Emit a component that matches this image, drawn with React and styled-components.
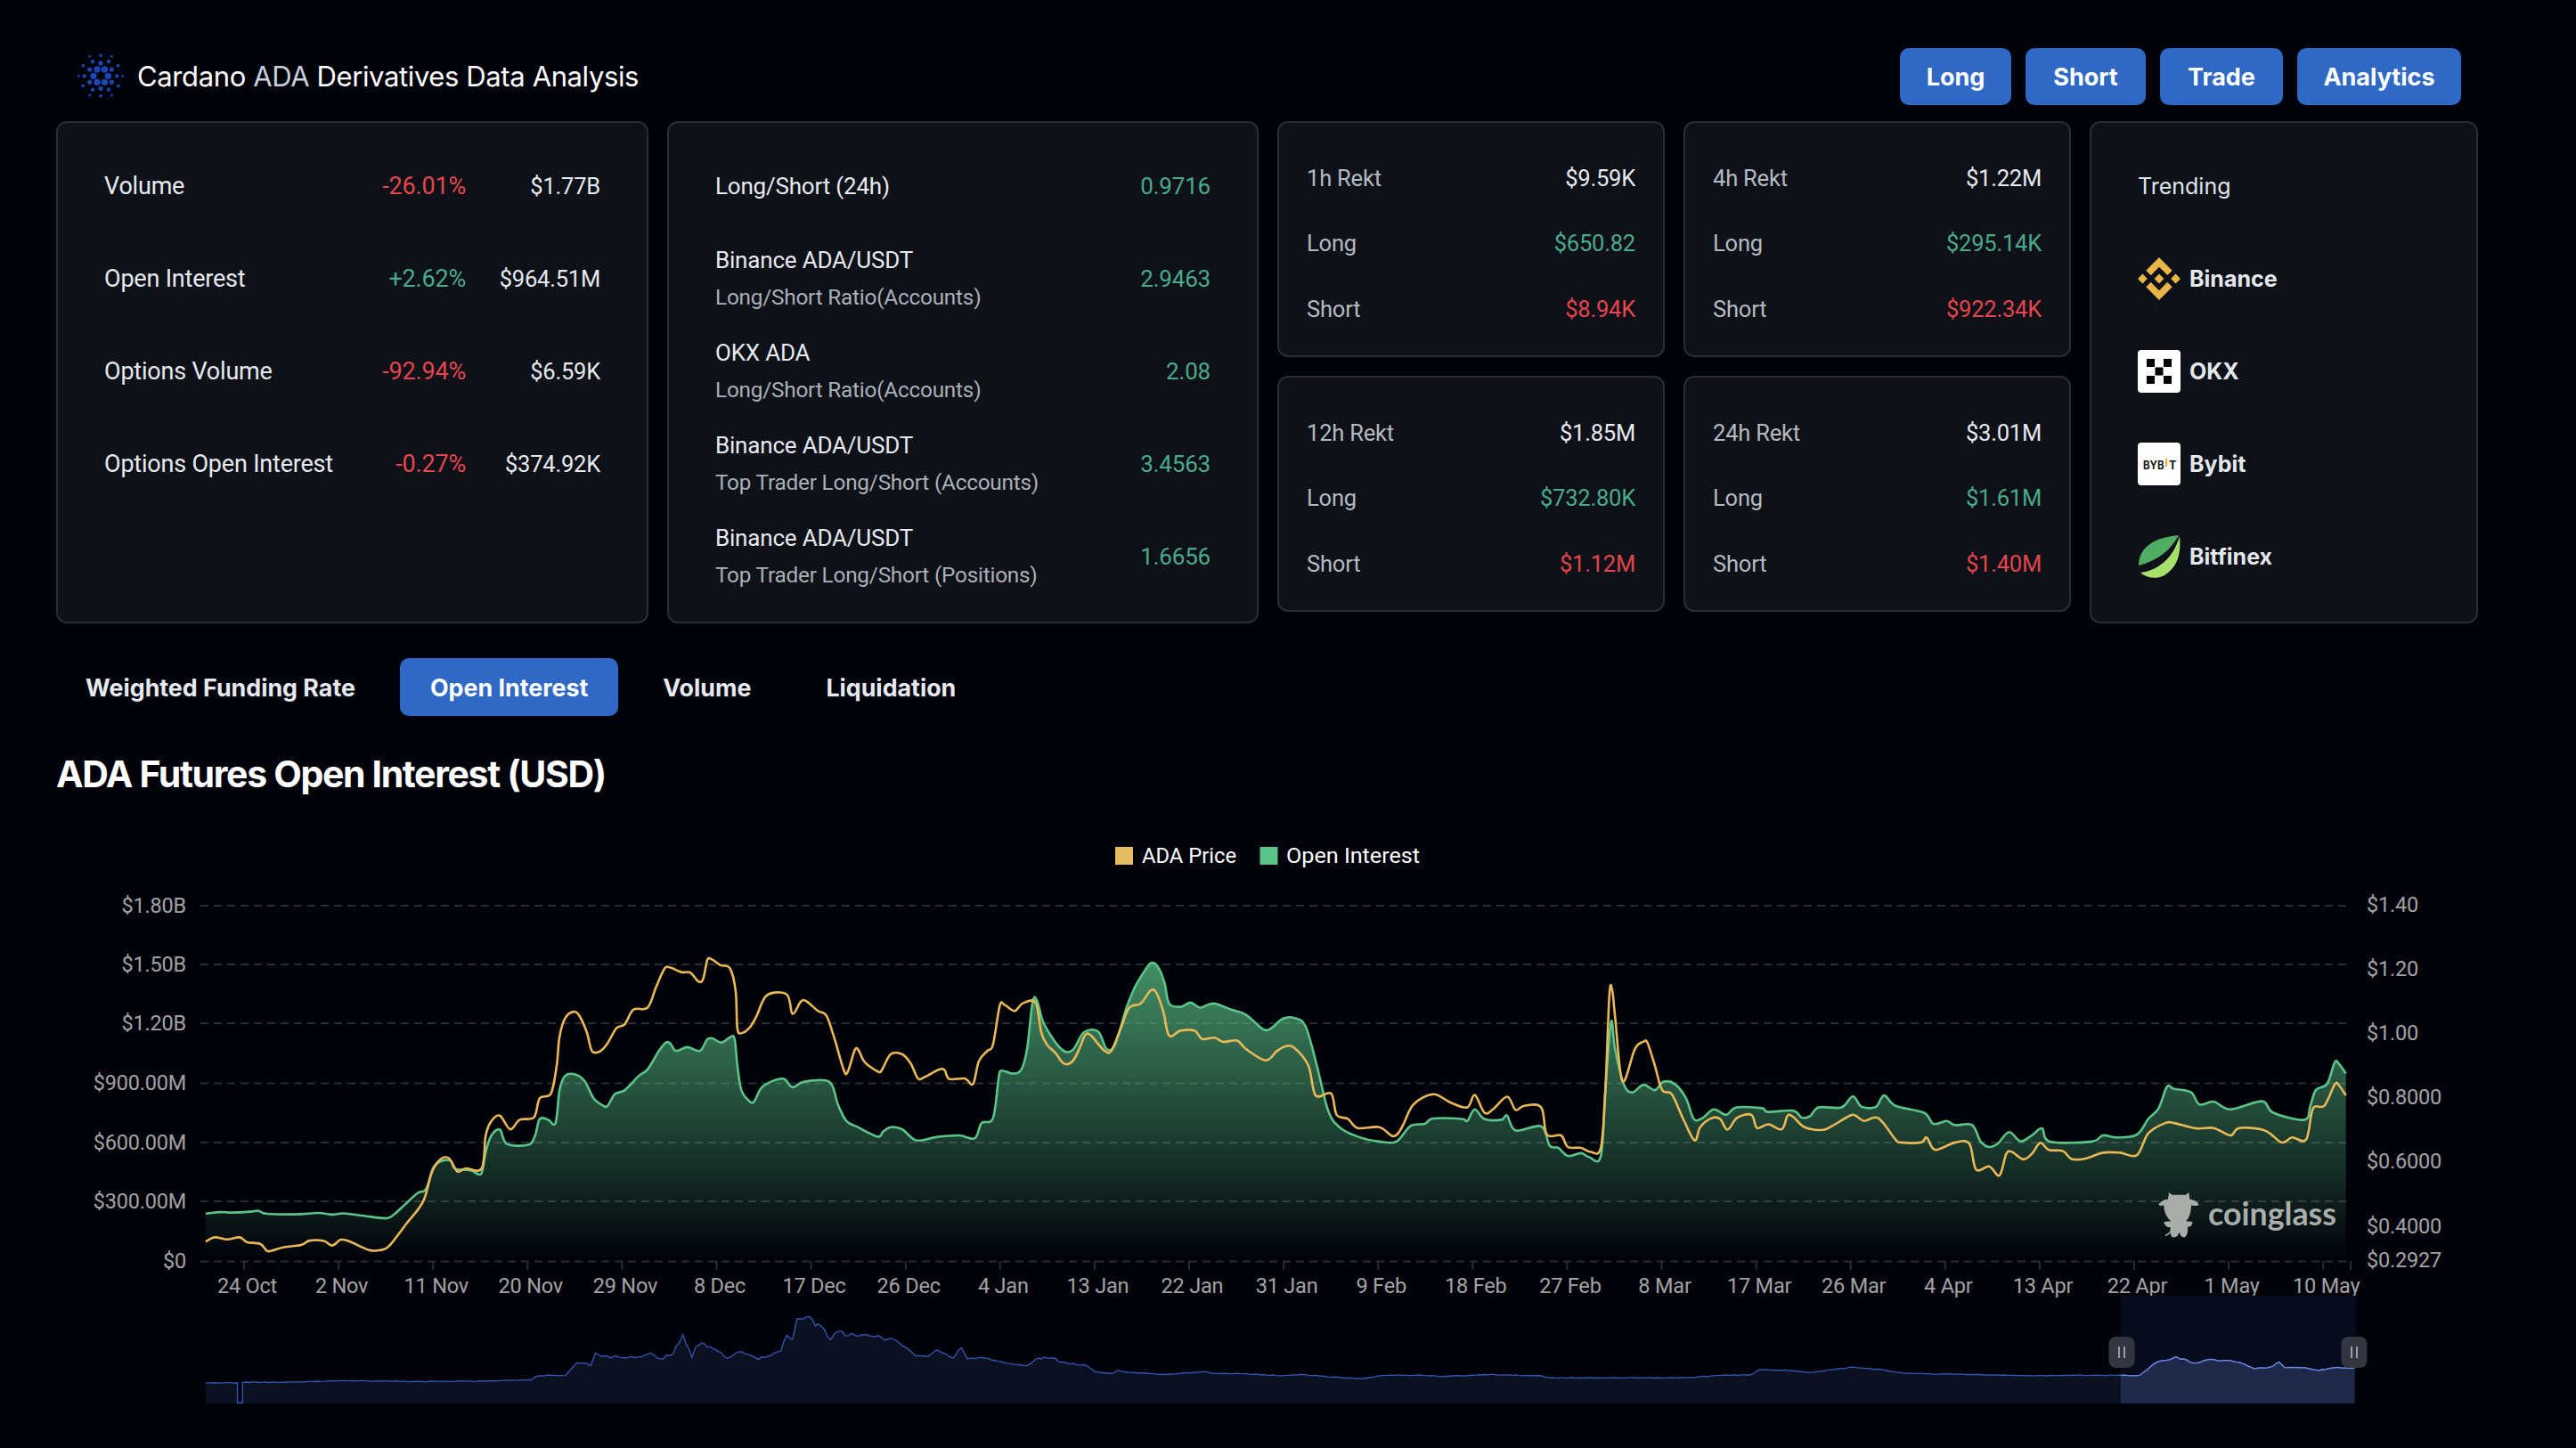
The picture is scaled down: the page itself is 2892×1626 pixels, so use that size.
import styled, { createGlobalStyle } from 'styled-components';

// chart traces, read off the picture in crop coordinates (crop origin x, crop scale 1.568 / 2.16)
const fromCrop = (ox, pts) => pts.map(([x, y]) => [ox + x / 1.568, 900 + y / 2.16]);

const OI = [
  ...fromCrop(0, [[362,1000],[385,996],[410,997],[440,995],[455,993],[470,1000],[530,1001],[560,998],[585,1002],[605,999],[640,1005],[680,1011],[695,1000],[715,975],[735,950],[750,940],[762,890],[775,873],[793,871],[800,890],[815,893],[830,895],[847,903],[855,850],[865,810],[880,796],[892,830],[930,833],[942,810],[950,770],[965,772],[978,780],[985,700],[995,665],[1015,663],[1030,680],[1045,720],[1062,738],[1070,738],[1082,710],[1100,700],[1125,665],[1140,650],[1160,605],[1172,585],[1180,587],[1190,605],[1210,596],[1232,605],[1245,577],[1255,575],[1270,585],[1285,572],[1293,575],[1298,640],[1305,700],[1320,728],[1328,727],[1340,695],[1360,678],[1380,673],[1395,693],[1415,680],[1460,680],[1475,735],[1490,775],[1510,790],[1545,813],[1555,800]]),
  ...fromCrop(1000, [[0,790],[20,795],[45,822],[80,814],[120,810],[148,817],[160,780],[180,768],[190,670],[195,653],[215,660],[230,650],[240,600],[250,485],[258,485],[270,540],[300,600],[320,603],[340,560],[365,558],[380,600],[395,590],[415,500],[430,450],[445,415],[458,392],[470,400],[482,440],[490,490],[510,498],[528,488],[545,500],[568,490],[600,505],[625,517],[655,552],[670,550],[690,527],[710,525],[730,545],[750,640],[770,750],[790,790],[820,812],[860,825],[890,825],[915,787],[940,782],[955,769],[1005,770],[1015,775],[1028,747],[1045,770],[1075,772],[1085,762],[1100,798],[1145,788],[1160,835],[1175,840],[1192,860],[1215,853],[1230,863],[1250,860],[1258,700],[1268,535],[1275,600],[1290,685],[1305,706],[1325,687],[1345,700],[1360,680],[1380,685],[1400,720]]),
  ...fromCrop(1892, [[15,770],[30,768],[50,747],[72,760],[90,742],[135,744],[145,753],[190,750],[205,767],[220,763],[235,742],[275,742],[295,715],[310,740],[335,741],[350,713],[370,738],[420,755],[437,782],[460,775],[475,785],[505,785],[520,825],[535,838],[550,830],[570,802],[590,824],[610,810],[628,793],[642,825],[715,825],[735,810],[760,815],[795,808],[815,770],[833,745],[848,692],[860,697],[890,705],[905,735],[930,728],[960,747],[1015,727],[1035,755],[1090,772],[1100,740],[1110,700],[1130,685],[1143,633],[1150,635],[1163,660]]),
];

const PRICE = [
  ...fromCrop(0, [[362,1068],[378,1057],[400,1062],[422,1057],[435,1069],[458,1073],[470,1090],[480,1089],[500,1081],[530,1076],[545,1065],[570,1066],[585,1077],[600,1063],[615,1067],[650,1088],[670,1088],[685,1078],[715,1025],[745,970],[760,900],[775,868],[790,865],[805,897],[820,890],[848,890],[855,810],[865,775],[880,762],[898,795],[915,772],[940,766],[950,720],[970,708],[980,640],[985,570],[995,525],[1010,510],[1020,520],[1033,560],[1042,605],[1055,607],[1068,590],[1085,550],[1100,540],[1115,505],[1140,500],[1155,450],[1170,405],[1180,403],[1200,414],[1215,415],[1230,437],[1238,430],[1245,385],[1252,382],[1268,397],[1285,405],[1295,460],[1298,550],[1305,562],[1320,548],[1332,520],[1350,470],[1385,468],[1395,515],[1410,485],[1420,485],[1440,508],[1455,520],[1470,580],[1485,650],[1492,657],[1505,602],[1512,605],[1522,632],[1545,655],[1552,652]]),
  ...fromCrop(1000, [[0,613],[20,613],[35,635],[48,672],[60,668],[85,650],[95,652],[103,673],[130,672],[145,685],[155,630],[170,605],[180,590],[192,495],[200,493],[218,508],[232,490],[255,488],[265,560],[275,590],[290,610],[305,636],[320,630],[332,600],[342,567],[352,567],[375,603],[388,605],[405,550],[420,500],[440,490],[458,458],[468,465],[480,510],[490,568],[510,556],[535,556],[548,576],[570,573],[585,583],[610,580],[625,600],[660,628],[680,605],[695,594],[710,597],[735,640],[748,713],[775,708],[785,760],[805,770],[822,792],[860,790],[885,812],[900,790],[920,735],[955,710],[985,730],[1015,742],[1028,712],[1045,755],[1060,747],[1085,716],[1100,748],[1115,738],[1145,742],[1155,808],[1180,810],[1192,838],[1215,840],[1232,850],[1250,840],[1258,700],[1265,470],[1270,457],[1275,520],[1288,678],[1310,600],[1325,583],[1332,585],[1345,640],[1358,700],[1375,710],[1395,770],[1415,822],[1425,790],[1445,768],[1460,770],[1473,796],[1490,767],[1515,760],[1525,792],[1545,783]]),
  ...fromCrop(1892, [[170,795],[180,762],[190,765],[210,790],[240,797],[255,790],[290,762],[300,762],[315,775],[340,768],[370,820],[380,827],[415,827],[425,815],[440,845],[475,827],[500,830],[512,893],[535,885],[553,907],[565,855],[575,850],[595,868],[610,855],[625,828],[640,845],[665,848],[680,867],[705,866],[735,852],[765,852],[795,858],[815,805],[845,780],[860,780],[900,793],[930,792],[960,810],[975,792],[1020,798],[1050,827],[1068,815],[1093,820],[1105,745],[1125,738],[1143,687],[1150,687],[1163,713]]),
];

const NAV = [
  ...fromCrop(0, [[362,1410],[418,1410],[418,1459],[427,1459],[427,1409],[520,1408],[620,1405],[730,1407],[850,1406],[935,1403],[945,1394],[965,1391],[995,1393],[1015,1362],[1030,1362],[1040,1368],[1048,1338],[1075,1350],[1085,1345],[1100,1350],[1130,1347],[1145,1338],[1162,1352],[1185,1340],[1190,1322],[1202,1293],[1218,1348],[1225,1322],[1240,1315],[1260,1330],[1280,1350],[1300,1335],[1335,1353],[1375,1332],[1385,1295],[1395,1305],[1403,1255],[1425,1250],[1435,1272],[1445,1272],[1462,1305],[1470,1290],[1500,1290],[1535,1298]]),
  ...fromCrop(1000, [[0,1302],[20,1320],[45,1345],[65,1347],[82,1330],[110,1350],[125,1325],[135,1352],[165,1350],[190,1358],[215,1365],[240,1368],[260,1350],[285,1350],[300,1360],[345,1368],[360,1383],[390,1388],[400,1380],[420,1385],[480,1390],[555,1383],[565,1387],[620,1388],[690,1393],[720,1390],[800,1398],[830,1400],[860,1393],[930,1391],[970,1395],[1045,1390],[1145,1393],[1160,1398]]),
  ...fromCrop(1892, [[0,1398],[60,1392],[115,1391],[131,1378],[185,1380],[220,1385],[295,1372],[345,1378],[385,1387],[510,1390],[615,1393],[720,1392],[800,1392],[830,1360],[865,1347],[895,1362],[925,1353],[975,1360],[1000,1375],[1030,1372],[1045,1360],[1055,1373],[1090,1373],[1115,1380],[1145,1373],[1178,1375]]),
];

function smooth(pts) {
  let d = `M${pts[0][0].toFixed(1)} ${pts[0][1].toFixed(1)}`;
  for (let i = 0; i < pts.length - 1; i++) {
    const p0 = pts[i - 1] || pts[i];
    const p1 = pts[i];
    const p2 = pts[i + 1];
    const p3 = pts[i + 2] || p2;
    const c1 = [p1[0] + (p2[0] - p0[0]) / 6, p1[1] + (p2[1] - p0[1]) / 6];
    const c2 = [p2[0] - (p3[0] - p1[0]) / 6, p2[1] - (p3[1] - p1[1]) / 6];
    d += `C${c1[0].toFixed(1)} ${c1[1].toFixed(1)} ${c2[0].toFixed(1)} ${c2[1].toFixed(1)} ${p2[0].toFixed(1)} ${p2[1].toFixed(1)}`;
  }
  return d;
}

function roughen(pts) {
  let seed = 7;
  const out = [pts[0]];
  for (let i = 1; i < pts.length; i++) {
    const [x0, y0] = pts[i - 1];
    const [x1, y1] = pts[i];
    const steps = Math.max(1, Math.round((x1 - x0) / 3.5));
    for (let s = 1; s <= steps; s++) {
      seed = (seed * 16807) % 2147483647;
      const t = s / steps;
      const y = y0 + (y1 - y0) * t;
      const amp = s === steps || steps === 1 ? 0 : Math.min(3, Math.max(0.4, (1540 - y) / 12));
      out.push([x0 + (x1 - x0) * t, y + ((seed % 100) / 50 - 1) * amp]);
    }
  }
  return out;
}

const straight = (pts) => 'M' + pts.map(([x, y]) => `${x.toFixed(1)} ${y.toFixed(1)}`).join('L');

const GRID_Y = [1017, 1083, 1149, 1216.5, 1283, 1349, 1416.5];
const LEFT_AXIS = ['$1.80B', '$1.50B', '$1.20B', '$900.00M', '$600.00M', '$300.00M', '$0'];
const RIGHT_AXIS = [
  ['$1.40', 1016],
  ['$1.20', 1088],
  ['$1.00', 1160],
  ['$0.8000', 1232],
  ['$0.6000', 1304],
  ['$0.4000', 1377],
  ['$0.2927', 1415],
];
const DATES = ['24 Oct', '2 Nov', '11 Nov', '20 Nov', '29 Nov', '8 Dec', '17 Dec', '26 Dec', '4 Jan', '13 Jan', '22 Jan', '31 Jan', '9 Feb', '18 Feb', '27 Feb', '8 Mar', '17 Mar', '26 Mar', '4 Apr', '13 Apr', '22 Apr', '1 May', '10 May'];

const ACTIONS = [
  { label: 'Long', width: 125 },
  { label: 'Short', width: 135 },
  { label: 'Trade', width: 138 },
  { label: 'Analytics', width: 184 },
];

const VOLUME = [
  { label: 'Volume', change: '-26.01%', value: '$1.77B' },
  { label: 'Open Interest', change: '+2.62%', value: '$964.51M', up: true },
  { label: 'Options Volume', change: '-92.94%', value: '$6.59K' },
  { label: 'Options Open Interest', change: '-0.27%', value: '$374.92K' },
];

const RATIOS = [
  { title: 'Long/Short (24h)', value: '0.9716' },
  { title: 'Binance ADA/USDT', sub: 'Long/Short Ratio(Accounts)', value: '2.9463' },
  { title: 'OKX ADA', sub: 'Long/Short Ratio(Accounts)', value: '2.08' },
  { title: 'Binance ADA/USDT', sub: 'Top Trader Long/Short (Accounts)', value: '3.4563' },
  { title: 'Binance ADA/USDT', sub: 'Top Trader Long/Short (Positions)', value: '1.6656' },
];

const REKT = [
  [
    { span: '1h Rekt', total: '$9.59K', long: '$650.82', short: '$8.94K' },
    { span: '12h Rekt', total: '$1.85M', long: '$732.80K', short: '$1.12M' },
  ],
  [
    { span: '4h Rekt', total: '$1.22M', long: '$295.14K', short: '$922.34K' },
    { span: '24h Rekt', total: '$3.01M', long: '$1.61M', short: '$1.40M' },
  ],
];

const CARDANO_DOTS = [
  [3.7, [[135,142],[184,142],[147,120],[172,120],[147,163],[172,163]]],
  [2.6, [[159,99],[159,184],[196,120],[122,120],[196,163],[122,163]]],
  [2.2, [[214,142],[104,142],[186,93],[132,93],[186,188],[132,188]]],
  [1.8, [[218,107],[100,107],[218,175],[100,175],[159,73],[159,209]]],
  [1.4, [[233,142],[85,142],[196,76],[122,76],[196,207],[122,207]]],
];

function CardanoLogo() {
  return (
    <svg width="57" height="52" viewBox="25 22 57 52" fill="#1f45b5">
      {CARDANO_DOTS.flatMap(([r, dots]) =>
        dots.map(([x, y]) => <circle key={`${x}-${y}`} cx={x / 3} cy={y / 3} r={r} />),
      )}
    </svg>
  );
}

function BinanceLogo() {
  return (
    <svg width="48" height="48" viewBox="0 0 24 24" fill="#e8b547">
      <path d="M16.624 13.9202l2.7175 2.7154-7.353 7.353-7.353-7.352 2.7175-2.7164 4.6355 4.6595 4.6356-4.6595zm4.6366-4.6366L24 12l-2.7154 2.7164L18.5682 12l2.6924-2.7164zm-9.272.001l2.7163 2.6914-2.7164 2.7174v-.001L9.2721 12l2.7164-2.7154zm-9.2722-.001L5.4088 12l-2.6914 2.6924L0 12l2.7164-2.7164zM11.9885.0115l7.353 7.329-2.7174 2.7154-4.6356-4.6356-4.6355 4.6595-2.7174-2.7154 7.353-7.353z" />
    </svg>
  );
}

function OkxLogo() {
  return (
    <svg width="48" height="48" viewBox="0 0 48 48">
      <rect width="48" height="48" rx="4" fill="#fff" />
      <path d="M10 10h9v9h-9zM29 10h9v9h-9zM19.500 19.500h9v9h-9zM10 29h9v9h-9zM29 29h9v9h-9z" fill="#000" />
    </svg>
  );
}

function BybitLogo() {
  return (
    <svg width="48" height="48" viewBox="0 0 48 48">
      <rect width="48" height="48" rx="4" fill="#fff" />
      <text x="6" y="29.500" fontFamily="Inter, sans-serif" fontWeight="700" fontSize="12.500" textLength="23.500" lengthAdjust="spacingAndGlyphs" fill="#111">BYB</text>
      <rect x="31.200" y="17.700" width="1.800" height="9.300" fill="#f7a600" />
      <text x="35" y="29.500" fontFamily="Inter, sans-serif" fontWeight="700" fontSize="12.500" fill="#111">T</text>
    </svg>
  );
}

function BitfinexLogo() {
  return (
    <svg width="48" height="48" viewBox="0 0 48 48">
      <path d="M1 34C1 18 12 3 46 0 38 16 22 29 1 34Z" fill="#52ad64" />
      <path d="M47 1C49 22 44 36 30 45 20 50 10 48 3 42 22 40 40 26 47 1Z" fill="#a8e06c" />
    </svg>
  );
}

const TRENDING = [
  { name: 'Binance', Logo: BinanceLogo },
  { name: 'OKX', Logo: OkxLogo },
  { name: 'Bybit', Logo: BybitLogo },
  { name: 'Bitfinex', Logo: BitfinexLogo },
];

function Chart() {
  const oiPath = smooth(OI);
  const first = OI[0];
  const last = OI[OI.length - 1];
  const navPath = straight(roughen(NAV));
  const navLast = NAV[NAV.length - 1];
  const navArea = `${navPath}L${navLast[0]} 1576L${NAV[0][0]} 1576Z`;

  return (
    <ChartSvg viewBox="0 930 2892 660">
      <defs>
        <linearGradient id="oiFill" gradientUnits="userSpaceOnUse" x1="0" y1="1082" x2="0" y2="1416">
          <stop offset="0" stopColor="#5bc589" stopOpacity="0.72" />
          <stop offset="1" stopColor="#5bc589" stopOpacity="0" />
        </linearGradient>
        <clipPath id="navSelected">
          <rect x="2381" y="1455" width="264" height="121" />
        </clipPath>
      </defs>

      <rect x="1252" y="951" width="20" height="20" fill="#e3bc62" />
      <LegendText x="1282" y="969" textLength="106" lengthAdjust="spacingAndGlyphs">ADA Price</LegendText>
      <rect x="1414.500" y="951" width="20" height="20" fill="#5bc589" />
      <LegendText x="1444" y="969" textLength="150" lengthAdjust="spacingAndGlyphs">Open Interest</LegendText>

      {GRID_Y.map((y, i) => (
        <g key={y}>
          <line x1="225" x2="2639" y1={y} y2={y} stroke="#2a2c2e" strokeWidth="2" strokeDasharray="9 6" />
          <AxisText x="209" y={y + 7.500} textAnchor="end">{LEFT_AXIS[i]}</AxisText>
        </g>
      ))}
      {RIGHT_AXIS.map(([label, y]) => (
        <AxisText key={label} x="2657" y={y + 7.500}>{label}</AxisText>
      ))}
      {DATES.map((label, i) => {
        const x = 274 + i * 106.100;
        return (
          <g key={label}>
            <line x1={x} x2={x} y1="1416" y2="1426" stroke="#2a2c2e" strokeWidth="2" />
            <AxisText x={x + 3.500} y="1452" textAnchor="middle">{label}</AxisText>
          </g>
        );
      })}
      <line x1="2639" x2="2639" y1="1416" y2="1426" stroke="#2a2c2e" strokeWidth="2" />

      <path d={`${oiPath}L${last[0]} 1416L${first[0]} 1416Z`} fill="url(#oiFill)" />
      <path d={oiPath} fill="none" stroke="#5bc589" strokeWidth="2.600" />
      <path d={smooth(PRICE)} fill="none" stroke="#eab857" strokeWidth="2.600" />

      <path
        fill="#a9aeab"
        transform="translate(2380 1310) scale(0.3333)"
        d="M165 87L175 95H222L232 87L235 110C250 112 265 120 266 130C255 134 245 132 240 130C240 160 230 178 222 184L245 186L240 200L228 204C230 220 225 235 218 238C208 240 203 232 200 220C197 232 190 240 178 238C170 235 168 222 170 205C160 205 150 200 148 186L172 184C155 170 148 150 148 130C142 133 135 133 130 128C135 118 150 110 162 110Z"
      />
      <path d="M2437 1383l-3 3-3 1.500" fill="none" stroke="#a9aeab" strokeWidth="1.500" />
      <WatermarkText x="2479" y="1376" textLength="144" lengthAdjust="spacingAndGlyphs">coinglass</WatermarkText>

      <rect x="2381" y="1455" width="264" height="121" fill="#070c1d" />
      <path d={navArea} fill="#0b1121" />
      <path d={navArea} fill="#20294a" clipPath="url(#navSelected)" />
      <path d={navPath} fill="none" stroke="#3458b8" strokeWidth="1.300" />
      <path d={navPath} fill="none" stroke="#6d8ae0" strokeWidth="1.300" clipPath="url(#navSelected)" />

      {[2382, 2643].map((x) => (
        <g key={x}>
          <rect x={x - 14.500} y="1501" width="29" height="35" rx="8" fill="#34363f" />
          <path d={`M${x - 3} 1512v13M${x + 3} 1512v13`} stroke="#9a9ea8" strokeWidth="2" />
        </g>
      ))}
    </ChartSvg>
  );
}

export default function App() {
  return (
    <Page>
      <GlobalStyle />
      <Header>
        <Brand>
          <CardanoLogo />
          <Title>
            Cardano <span>ADA</span> Derivatives Data Analysis
          </Title>
        </Brand>
        <Actions>
          {ACTIONS.map((a) => (
            <ActionButton key={a.label} $w={a.width}>
              {a.label}
            </ActionButton>
          ))}
        </Actions>
      </Header>

      <Cards>
        <Card $w={665}>
          {VOLUME.map((r) => (
            <VolumeRow key={r.label}>
              <span>{r.label}</span>
              <Change $up={r.up}>{r.change}</Change>
              <Value>{r.value}</Value>
            </VolumeRow>
          ))}
        </Card>

        <Card $w={664}>
          {RATIOS.map((r, i) => (
            <RatioRow key={i}>
              <div>
                <div>{r.title}</div>
                {r.sub && <Sub>{r.sub}</Sub>}
              </div>
              <Change $up>{r.value}</Change>
            </RatioRow>
          ))}
        </Card>

        {REKT.map((col, i) => (
          <RektColumn key={i}>
            {col.map((c) => (
              <RektCard key={c.span}>
                <RektRow>
                  <Dim>{c.span}</Dim>
                  <Value>{c.total}</Value>
                </RektRow>
                <RektRow>
                  <Dim>Long</Dim>
                  <Change $up>{c.long}</Change>
                </RektRow>
                <RektRow>
                  <Dim>Short</Dim>
                  <Change>{c.short}</Change>
                </RektRow>
              </RektCard>
            ))}
          </RektColumn>
        ))}

        <Card $w={436}>
          <TrendRow>
            <TrendTitle>Trending</TrendTitle>
          </TrendRow>
          {TRENDING.map(({ name, Logo }) => (
            <TrendRow key={name}>
              <Logo />
              <TrendName>{name}</TrendName>
            </TrendRow>
          ))}
        </Card>
      </Cards>

      <Tabs>
        {['Weighted Funding Rate', 'Open Interest', 'Volume', 'Liquidation'].map((t) => (
          <Tab key={t} $active={t === 'Open Interest'}>
            {t}
          </Tab>
        ))}
      </Tabs>

      <Heading>ADA Futures Open Interest (USD)</Heading>

      <Chart />
    </Page>
  );
}

const GlobalStyle = createGlobalStyle`
  html, body {
    margin: 0;
    background: #01020a;
  }
`;

const Page = styled.div`
  width: 2892px;
  height: 1626px;
  overflow: hidden;
  background: #01020a;
  color: #e6eaf0;
  font-family: Roboto, sans-serif;
`;

const Header = styled.header`
  display: flex;
  align-items: center;
  justify-content: space-between;
  height: 64px;
  padding: 54px 129px 18px 85px;
`;

const Brand = styled.div`
  display: flex;
  align-items: center;
  gap: 12px;
`;

const Title = styled.h1`
  margin: 0 0 2px;
  font: 400 31px Inter, sans-serif;
  letter-spacing: -0.38px;
  color: #fff;
  span {
    color: #c7d0dc;
  }
`;

const Actions = styled.div`
  display: flex;
  gap: 16px;
`;

const ActionButton = styled.button`
  width: ${(p) => p.$w}px;
  height: 64px;
  padding: 0;
  border: 0;
  border-radius: 10px;
  background: #2f69c5;
  color: #fff;
  font: 700 27px Inter, sans-serif;
`;

const Cards = styled.div`
  display: flex;
  align-items: flex-start;
  gap: 21px;
  padding: 0 0 0 63px;
`;

const Card = styled.section`
  box-sizing: border-box;
  width: ${(p) => p.$w}px;
  height: 564px;
  padding: 19px 52px;
  border: 2px solid #2a2d32;
  border-radius: 12px;
  background: #0e1117;
`;

const VolumeRow = styled.div`
  box-sizing: border-box;
  display: grid;
  grid-template-columns: 1fr auto 151px;
  align-items: center;
  height: 104px;
  padding-bottom: 1px;
  font-size: 27px;
  letter-spacing: -0.2px;
`;

const Change = styled.span`
  color: ${(p) => (p.$up ? '#4aaa8c' : '#e5454c')};
  text-align: right;
`;

const Value = styled.span`
  color: #e6eaf0;
  text-align: right;
  font-size: 25.500px;
`;

const RatioRow = styled.div`
  display: flex;
  align-items: center;
  justify-content: space-between;
  height: 104px;
  font-size: 26px;
  letter-spacing: -0.2px;
  line-height: 41px;
`;

const Sub = styled.div`
  color: #a9b0b8;
  font-size: 24.300px;
`;

const RektColumn = styled.div`
  display: flex;
  flex-direction: column;
  gap: 21px;
`;

const RektCard = styled.section`
  box-sizing: border-box;
  width: 435px;
  height: 265px;
  padding: 25px 31px 0 31px;
  border: 2px solid #2a2d32;
  border-radius: 12px;
  background: #0e1117;
`;

const RektRow = styled.div`
  display: flex;
  align-items: center;
  justify-content: space-between;
  height: 73.500px;
  font-size: 25.500px;
  letter-spacing: -0.2px;
`;

const Dim = styled.span`
  color: #b4bac2;
`;

const TrendRow = styled.div`
  display: flex;
  align-items: center;
  gap: 10px;
  height: 104px;
`;

const TrendTitle = styled.span`
  font: 400 25px Inter, sans-serif;
  color: #dfe4ea;
`;

const TrendName = styled.span`
  font: 700 25px Inter, sans-serif;
  color: #e3e8ee;
`;

const Tabs = styled.nav`
  display: flex;
  gap: 16px;
  padding: 39px 0 0 62px;
`;

const Tab = styled.button`
  height: 65px;
  padding: 0 34px;
  border: 0;
  border-radius: 10px;
  background: ${(p) => (p.$active ? '#2f69c5' : 'transparent')};
  color: ${(p) => (p.$active ? '#fff' : '#e6eaf0')};
  font: 700 26.800px Inter, sans-serif;
`;

const Heading = styled.h2`
  margin: 0;
  padding: 40px 0 0 63px;
  color: #fff;
  font: 700 41px/50px Inter, sans-serif;
  letter-spacing: -1.35px;
`;

const ChartSvg = styled.svg`
  display: block;
  width: 2892px;
  height: 660px;
  margin-top: 36px;
`;

const AxisText = styled.text`
  font: 400 23.500px Roboto, sans-serif;
  letter-spacing: -0.2px;
  fill: #a3a3a3;
`;

const LegendText = styled.text`
  font: 400 24.500px Roboto, sans-serif;
  fill: #fff;
`;

const WatermarkText = styled.text`
  font: 700 36px Lato, sans-serif;
  fill: #a9aeab;
`;
